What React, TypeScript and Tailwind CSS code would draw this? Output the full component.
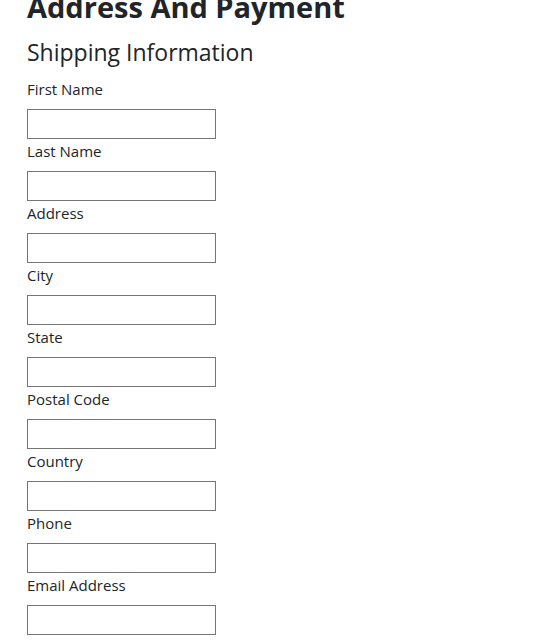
const fields = [
  "First Name",
  "Last Name",
  "Address",
  "City",
  "State",
  "Postal Code",
  "Country",
  "Phone",
  "Email Address",
];

export default function App() {
  return (
    <main className="w-full h-[642px] overflow-hidden bg-white text-[#212529] font-['Open_Sans',sans-serif]">
      <section className="pl-[27px]">
        <h1 className="mt-[-10px] text-[29px] leading-[1.2] font-bold">Address And Payment</h1>
        <h2 className="mt-[14px] text-[23px] leading-[1.2] font-normal">Shipping Information</h2>
        <form className="mt-[11px]">
          {fields.map((f) => (
            <div key={f}>
              <label className="block text-[15px] leading-[24px] mb-2">{f}</label>
              <input type="text" className="block w-[189px] h-[30px] border border-[#767676] bg-white" />
            </div>
          ))}
        </form>
      </section>
    </main>
  );
}
